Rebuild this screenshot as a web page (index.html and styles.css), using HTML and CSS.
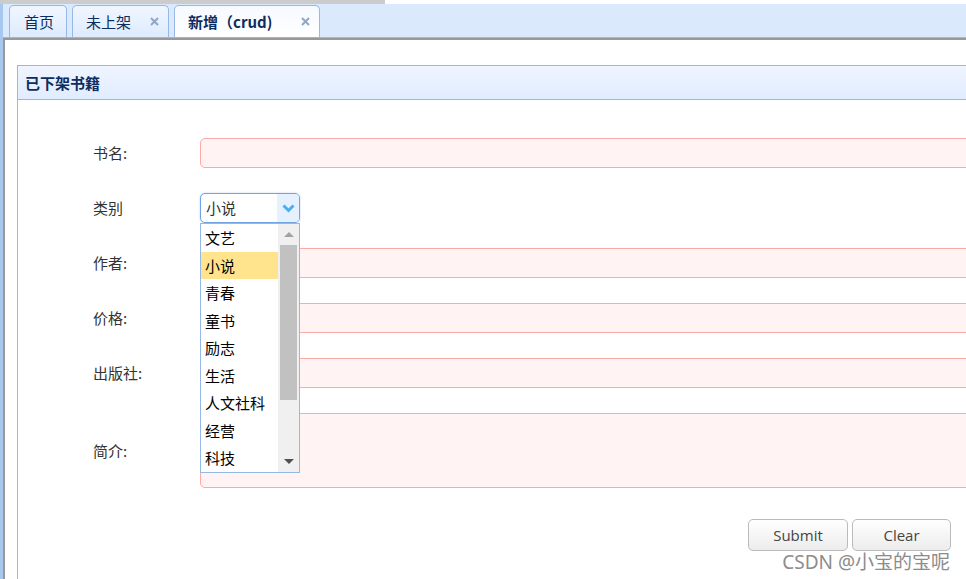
FILE: index.html
```html
<!DOCTYPE html>
<html lang="zh">
<head>
<meta charset="utf-8">
<title>已下架书籍</title>
<link rel="stylesheet" href="styles.css">
</head>
<body>
<div class="topbar"><div class="topbar-gray"></div></div>
<div class="tabs">
  <div class="tabs-header">
    <div class="tab tab-home"><span class="tab-title">首页</span></div>
    <div class="tab tab-shelf"><span class="tab-title">未上架</span><svg class="tab-close" width="9" height="9" viewBox="0 0 9 9"><path d="M1 1L8 8M8 1L1 8" stroke="#8fa6c6" stroke-width="2"/></svg></div>
    <div class="tab tab-new tab-selected"><span class="tab-title">新增（crud)</span><svg class="tab-close" width="9" height="9" viewBox="0 0 9 9"><path d="M1 1L8 8M8 1L1 8" stroke="#8fa6c6" stroke-width="2"/></svg></div>
  </div>
  <div class="tabs-body">
    <div class="panel">
      <div class="panel-header">已下架书籍</div>
      <div class="panel-body">
        <div class="form-row">
          <label class="form-label">书名:</label>
          <div class="textbox"></div>
        </div>
        <div class="form-row">
          <label class="form-label">类别</label>
          <div class="combo-wrap">
            <div class="combo">
              <span class="combo-text">小说</span>
              <span class="combo-arrow"><svg width="13" height="9" viewBox="0 0 13 9"><path d="M1.5 1.5L6.5 6.5L11.5 1.5" fill="none" stroke="#4aaff0" stroke-width="3"/></svg></span>
            </div>
            <div class="combo-panel">
              <div class="combo-list">
                <div class="combo-item">文艺</div>
                <div class="combo-item combo-item-hover">小说</div>
                <div class="combo-item">青春</div>
                <div class="combo-item">童书</div>
                <div class="combo-item">励志</div>
                <div class="combo-item">生活</div>
                <div class="combo-item">人文社科</div>
                <div class="combo-item">经营</div>
                <div class="combo-item">科技</div>
              </div>
              <div class="scrollbar">
                <div class="sb-btn"><span class="sb-up"></span></div>
                <div class="sb-track"><div class="sb-thumb"></div></div>
                <div class="sb-btn sb-btn-bottom"><span class="sb-down"></span></div>
              </div>
            </div>
          </div>
        </div>
        <div class="form-row">
          <label class="form-label">作者:</label>
          <div class="textbox"></div>
        </div>
        <div class="form-row">
          <label class="form-label">价格:</label>
          <div class="textbox"></div>
        </div>
        <div class="form-row">
          <label class="form-label">出版社:</label>
          <div class="textbox"></div>
        </div>
        <div class="form-row form-row-area">
          <label class="form-label">简介:</label>
          <div class="textbox textbox-area"></div>
        </div>
        <div class="btn-row">
          <button class="btn btn-submit">Submit</button>
          <button class="btn btn-clear">Clear</button>
        </div>
      </div>
    </div>
  </div>
</div>
<div class="watermark">CSDN @小宝的宝呢</div>
</body>
</html>
```
FILE: styles.css
```css
html, body {
  margin: 0;
  padding: 0;
  overflow: hidden;
  width: 966px;
  height: 579px;
  background: #fff;
  font-family: "Noto Sans CJK SC", "Noto Sans", sans-serif;
  font-size: 15px;
  color: #333;
}
.topbar {
  height: 4px;
  background: #fff;
}
.topbar-gray {
  width: 385px;
  height: 4px;
  background: #cccccc;
}
.tabs {
  border-left: 3px solid #a6c8ef;
  width: 966px;
  height: 575px;
  box-sizing: border-box;
  display: flex;
  flex-direction: column;
  overflow: hidden;
}
.tabs-header {
  height: 33px;
  flex: none;
  border-bottom: 1px solid #95b8e7;
  background: #dbe9fc;
  display: flex;
  align-items: flex-end;
  gap: 5px;
  padding-left: 6px;
}
.tab {
  height: 32px;
  box-sizing: border-box;
  border: 1px solid #95b8e7;
  border-bottom: none;
  border-radius: 5px 5px 0 0;
  background: linear-gradient(#f0f6ff, #deebfd);
  display: flex;
  align-items: center;
  padding: 0 9px 0 13px;
  color: #0e2d5f;
  line-height: 20px;
}
.tab-home { width: 58px; padding-left: 14px; }
.tab-shelf { width: 97px; }
.tab-new { width: 146px; }
.tab-selected {
  background: linear-gradient(#f6faff, #ffffff);
  font-weight: bold;
}
.tab-title { white-space: nowrap; }
.tab-close { margin-left: auto; }
.tabs-body {
  flex: 1;
  min-height: 0;
  border-top: 2px solid #999;
  border-left: 2px solid #999;
  background: #fff;
  padding: 25px 0 0 12px;
  overflow: hidden;
}
.panel {
  border-left: 1px solid #95b8e7;
  height: 600px;
  overflow: hidden;
}
.panel-header {
  height: 33px;
  border-top: 1px solid #95b8e7;
  border-bottom: 1px solid #95b8e7;
  background: linear-gradient(#eff5ff, #e0ecff);
  padding-left: 7px;
  font-weight: bold;
  color: #0e2d5f;
  line-height: 33px;
}
.panel-body {
  padding: 38px 0 0 75px;
}
.form-row {
  display: flex;
  align-items: center;
  height: 30px;
  margin-bottom: 25px;
}
.form-row-area {
  height: 75px;
  margin-bottom: 31px;
}
.form-label {
  width: 107px;
  flex: none;
  color: #333;
  line-height: 20px;
  font-size: 15px;
}
.textbox {
  flex: none;
  width: 820px;
  height: 30px;
  box-sizing: border-box;
  border: 1px solid #ffa8a8;
  background: #fff3f3;
  border-radius: 5px;
}
.textbox-area { height: 75px; }
.combo-wrap {
  position: relative;
  width: 100px;
  height: 30px;
}
.combo {
  width: 100px;
  height: 30px;
  box-sizing: border-box;
  border: 1px solid #6fa4e4;
  border-radius: 5px;
  background: #fff;
  display: flex;
  align-items: center;
  overflow: hidden;
  box-shadow: 0 0 2px rgba(110,164,228,0.5);
}
.combo-text {
  flex: 1;
  padding-left: 5px;
  color: #333;
  line-height: 20px;
}
.combo-arrow {
  width: 22px;
  height: 28px;
  background: #e6f1ff;
  display: flex;
  align-items: center;
  justify-content: center;
}
.combo-panel {
  position: absolute;
  top: 30px;
  left: 0;
  width: 100px;
  height: 250px;
  box-sizing: border-box;
  border: 1px solid #95b8e7;
  background: #fff;
  display: flex;
  z-index: 5;
}
.combo-list {
  flex: 1;
  overflow: hidden;
}
.combo-item {
  height: 27.5px;
  line-height: 27.5px;
  padding-left: 4px;
  color: #000;
  white-space: nowrap;
}
.combo-item-hover { background: #ffe48d; }
.scrollbar {
  width: 21px;
  background: #f0f0f0;
  display: flex;
  flex-direction: column;
}
.sb-btn {
  height: 21px;
  display: flex;
  align-items: center;
  justify-content: center;
}
.sb-up {
  width: 0;
  height: 0;
  border-left: 5px solid transparent;
  border-right: 5px solid transparent;
  border-bottom: 5px solid #a3a3a3;
}
.sb-down {
  width: 0;
  height: 0;
  border-left: 5px solid transparent;
  border-right: 5px solid transparent;
  border-top: 5px solid #505050;
}
.sb-track {
  flex: 1;
  padding: 0 2px;
}
.sb-thumb {
  height: 155px;
  background: #c1c1c1;
}
.btn-row {
  display: flex;
  gap: 4px;
  padding-left: 655px;
}
.btn {
  flex: none;
  width: 100px;
  height: 32px;
  box-sizing: border-box;
  border: 1px solid #bbbbbb;
  border-radius: 5px;
  background: linear-gradient(#ffffff, #ececec);
  color: #444;
  font-family: "Open Sans", "Noto Sans", sans-serif;
  font-size: 15px;
  padding: 0;
  line-height: 30px;
}
.btn-clear { width: 99px; }
.watermark {
  position: absolute;
  right: 16px;
  bottom: 5px;
  font-size: 19px;
  line-height: 24px;
  color: #8c8c8c;
  text-shadow: 0 0 2px #fff;
  font-family: "Noto Sans", "Noto Sans CJK SC", sans-serif;
}
```
